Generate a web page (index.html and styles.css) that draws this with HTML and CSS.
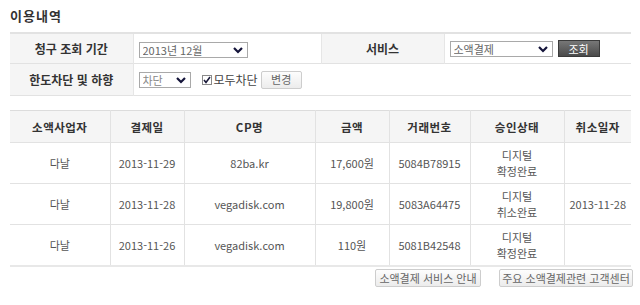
FILE: index.html
```html
<!DOCTYPE html>
<html lang="ko">
<head>
    <meta charset="UTF-8">
    <title>이용내역</title>
    <link rel="stylesheet" href="styles.css">
</head>
<body>
    <h2 class="title">이용내역</h2>

    <table class="search">
        <colgroup>
            <col class="col-label">
            <col class="col-value">
            <col class="col-label">
            <col>
        </colgroup>
        <tr class="row-1">
            <th>청구 조회 기간</th>
            <td>
                <span class="select month">
                    <select><option>2013년 12월</option></select>
                    <svg class="arrow" width="10" height="7" viewBox="0 0 10 7"><polyline points="1,1 5,5 9,1" fill="none" stroke="#14143a" stroke-width="2.2"/></svg>
                </span>
            </td>
            <th class="sub">서비스</th>
            <td>
                <div class="field">
                    <span class="select service">
                        <select><option>소액결제</option></select>
                        <svg class="arrow" width="10" height="7" viewBox="0 0 10 7"><polyline points="1,1 5,5 9,1" fill="none" stroke="#14143a" stroke-width="2.2"/></svg>
                    </span>
                    <button class="btn-dark">조회</button>
                </div>
            </td>
        </tr>
        <tr class="row-2">
            <th>한도차단 및 하향</th>
            <td colspan="3">
                <div class="field">
                    <span class="select block">
                        <select><option>차단</option></select>
                        <svg class="arrow" width="10" height="7" viewBox="0 0 10 7"><polyline points="1,1 5,5 9,1" fill="none" stroke="#14143a" stroke-width="2.2"/></svg>
                    </span>
                    <label class="check">
                        <span class="box"><svg width="8" height="8" viewBox="0 0 8 8"><polyline points="1,4 3,6.5 7,1" fill="none" stroke="#1a1a3a" stroke-width="1.6"/></svg></span>
                        모두차단
                    </label>
                    <button class="btn-light change">변경</button>
                </div>
            </td>
        </tr>
    </table>

    <table class="list">
        <colgroup>
            <col style="width:100px">
            <col style="width:74px">
            <col style="width:131px">
            <col style="width:74px">
            <col style="width:81px">
            <col style="width:94px">
            <col style="width:67px">
        </colgroup>
        <thead>
            <tr>
                <th>소액사업자</th>
                <th>결제일</th>
                <th>CP명</th>
                <th>금액</th>
                <th>거래번호</th>
                <th>승인상태</th>
                <th>취소일자</th>
            </tr>
        </thead>
        <tbody>
            <tr>
                <td>다날</td>
                <td>2013-11-29</td>
                <td>82ba.kr</td>
                <td>17,600원</td>
                <td>5084B78915</td>
                <td>디지털<br>확정완료</td>
                <td></td>
            </tr>
            <tr>
                <td>다날</td>
                <td>2013-11-28</td>
                <td>vegadisk.com</td>
                <td>19,800원</td>
                <td>5083A64475</td>
                <td>디지털<br>취소완료</td>
                <td>2013-11-28</td>
            </tr>
            <tr>
                <td>다날</td>
                <td>2013-11-26</td>
                <td>vegadisk.com</td>
                <td>110원</td>
                <td>5081B42548</td>
                <td>디지털<br>확정완료</td>
                <td></td>
            </tr>
        </tbody>
    </table>

    <div class="links">
        <button class="btn-light guide">소액결제 서비스 안내</button>
        <button class="btn-light center">주요 소액결제관련 고객센터</button>
    </div>
</body>
</html>
```

FILE: styles.css
```css
body {
    margin: 0;
    padding: 8px 0 0 10px;
    font-family: "Noto Sans CJK KR", "Noto Sans", sans-serif;
    font-size: 12px;
    color: #333;
    background: #fff;
}
.title {
    margin: 0 0 8px;
    font-size: 13px;
    line-height: 16px;
    font-weight: bold;
    color: #333;
    letter-spacing: 1px;
}

/* search box */
.search {
    width: 621px;
    border-collapse: collapse;
    table-layout: fixed;
    border-top: 2px solid #e2e2e2;
    border-bottom: 1px solid #e2e2e2;
}
.search .col-label {
    width: 123px;
}
.search .col-value {
    width: 188px;
}
.search th {
    background: #f5f5f5;
    font-weight: bold;
    color: #333;
    border-right: 1px solid #e6e6e6;
    padding: 0;
    line-height: 16px;
}
.search th.sub {
    border-left: 1px solid #e6e6e6;
}
.search td {
    padding: 0 0 0 5px;
}
.search tr + tr th,
.search tr + tr td {
    border-top: 1px solid #e2e2e2;
}
.search .row-1 th {
    height: 29px;
}
.search .row-2 th {
    height: 31px;
}
.field {
    display: flex;
    align-items: center;
}
.select {
    position: relative;
    display: inline-block;
    vertical-align: middle;
}
.select select {
    appearance: none;
    -webkit-appearance: none;
    display: block;
    height: 16px;
    margin: 0;
    padding: 0 0 0 3px;
    border: 1px solid #a9a9a9;
    border-radius: 0;
    background: #fff;
    font-family: inherit;
    font-size: 11px;
    line-height: 14px;
    color: #666;
}
.select .arrow {
    position: absolute;
    right: 5px;
    top: 5px;
    pointer-events: none;
}
.select.month select {
    width: 109px;
}
.select.service select {
    width: 103px;
}
.select.block select {
    width: 52px;
    color: #888;
}
.btn-dark {
    width: 42px;
    height: 17px;
    margin-left: 5px;
    padding: 0;
    border: 1px solid #3a3a3a;
    background: linear-gradient(#777, #4a4a4a);
    color: #fff;
    font-family: inherit;
    font-size: 11px;
    line-height: 14px;
}
.btn-light {
    height: 18px;
    padding: 0;
    border: 1px solid #cdcdcd;
    border-radius: 2px;
    background: linear-gradient(#fdfdfd, #ececec);
    color: #666;
    font-family: inherit;
    font-size: 11px;
    line-height: 15px;
}
.check {
    display: flex;
    align-items: center;
    margin-left: 11px;
    color: #444;
    font-size: 12px;
}
.check .box {
    display: flex;
    align-items: center;
    justify-content: center;
    width: 8px;
    height: 8px;
    margin-right: 2px;
    border: 1px solid #8a8a8a;
    background: #fff;
}
.btn-light.change {
    width: 41px;
    margin-left: 3px;
}

/* result list */
.list {
    width: 621px;
    margin-top: 14px;
    border-collapse: collapse;
    table-layout: fixed;
    border-top: 1px solid #dcdcdc;
    border-bottom: 2px solid #e8e8e8;
}
.list th,
.list td {
    padding: 0;
    text-align: center;
    line-height: 16px;
    border-left: 1px solid #e2e2e2;
}
.list th:first-child,
.list td:first-child {
    border-left: none;
}
.list th {
    height: 31px;
    background: #f5f5f5;
    font-weight: bold;
    font-size: 11.5px;
    letter-spacing: 0.5px;
    color: #333;
    border-bottom: 1px solid #e2e2e2;
}
.list td {
    height: 40px;
    font-size: 11px;
    color: #555;
    border-bottom: 1px solid #e2e2e2;
}

.links {
    display: flex;
    justify-content: flex-end;
    gap: 18px;
    width: 623px;
    margin-top: 2px;
}
.btn-light.guide {
    width: 106px;
}
.btn-light.center {
    width: 134px;
}
```
